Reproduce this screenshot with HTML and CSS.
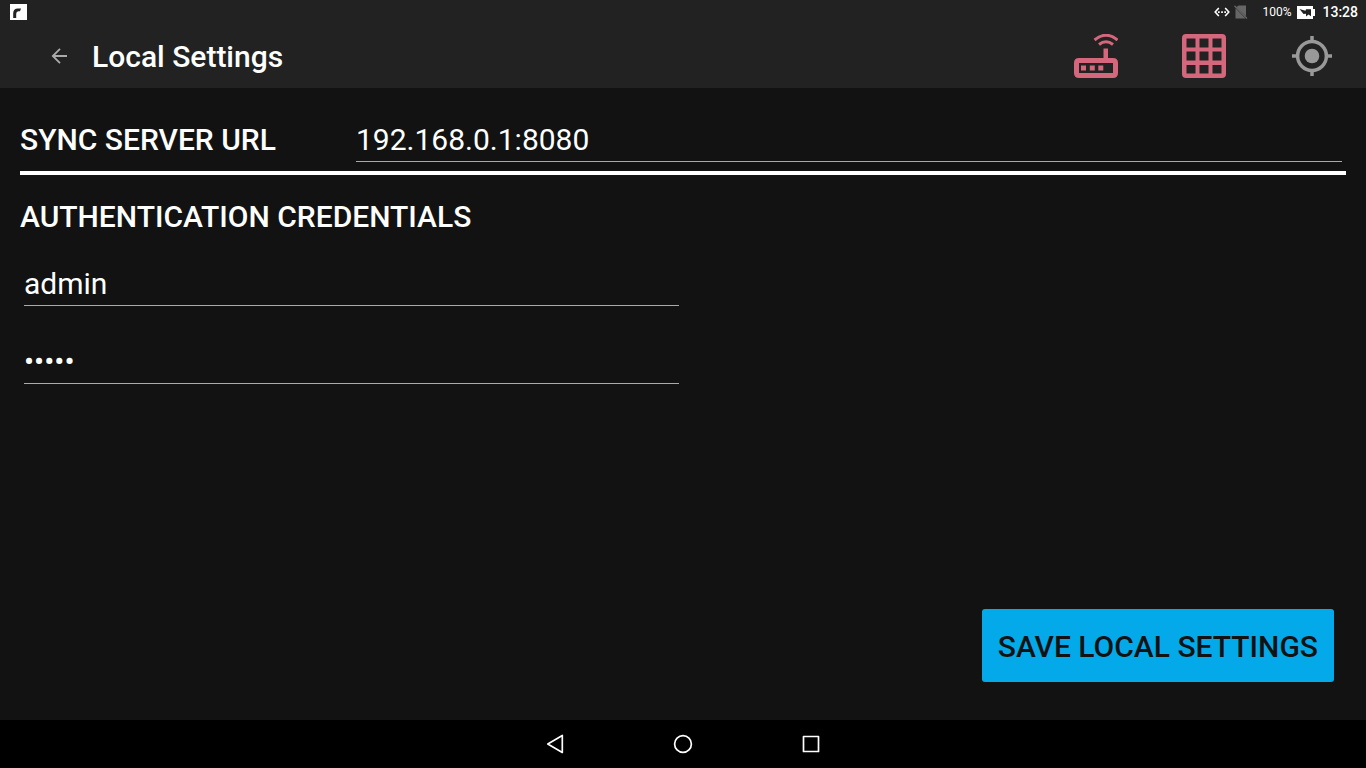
FILE: index.html
```html
<!DOCTYPE html>
<html lang="en">
<head>
<meta charset="utf-8">
<meta name="viewport" content="width=device-width, initial-scale=1">
<title>Local Settings</title>
<link rel="stylesheet" href="styles.css">
</head>
<body>
<div class="status-bar">
  <svg class="notification" width="17" height="16" viewBox="0 0 17 16" aria-hidden="true">
    <path fill="#fff" d="M0 0h17v16H0z"/>
    <path fill="#222" d="M3.200 14V9.500Q3.200 4.500 8 4.500h3L10 7.200H8.500Q6.200 7.500 6.200 10v4z"/>
  </svg>
  <div class="status-icons">
    <svg width="16" height="12" viewBox="0 0 16 12" fill="none" stroke="#fff" stroke-width="1.600" aria-hidden="true">
      <path d="M4.800 2L1.200 6l3.600 4M11.200 2l3.600 4-3.600 4"/>
      <path fill="#fff" stroke="none" d="M4 5.200h1.700v1.700H4zM7.200 5.200h1.700v1.700H7.200zM10.300 5.200H12v1.700h-1.700z"/>
    </svg>
    <svg class="sim" width="14" height="14" viewBox="0 0 14 14" aria-hidden="true">
      <path fill="#666" d="M4.500 0.500H12v10.800L2.500 2.300zM1.500 3.200l10 10.300h-10z"/>
      <path stroke="#666" stroke-width="1.300" d="M.5.700l12.500 12.800"/>
    </svg>
    <span class="battery-level">100%</span>
    <svg class="battery" width="18" height="13" viewBox="0 0 18 13" aria-hidden="true">
      <path fill="#fff" d="M0 0h16v3h2v7h-2v3H0z"/>
      <path fill="#222" d="M2.500 3L8.500 4.800l.5-1.600H14v7L11.500 8.500 9 10.500V7.800L6.500 8z"/>
    </svg>
    <time class="clock">13:28</time>
  </div>
</div>
<header class="app-bar">
  <button class="icon-button back" type="button" aria-label="Back">
    <svg width="18" height="18" viewBox="0 0 18 18" fill="none" stroke="#aaa" stroke-width="1.800"><path d="M17 9H3M10 1.800L2.800 9l7.200 7.200"/></svg>
  </button>
  <h1 class="title">Local Settings</h1>
  <div class="actions">
    <button class="icon-button" type="button" aria-label="Router">
      <svg width="44" height="44" viewBox="0 0 44 44" fill="#d4677c">
        <path fill-rule="evenodd" d="M5 24h24.500V14.500h4.500V24h5q5 0 5 5v10q0 5-5 5H5q-5 0-5-5V29q0-5 5-5zM5 29v10h34V29z"/>
        <path d="M7 31.500h5v5H7zM15.800 31.500h5v5h-5zM24.300 31.500h5v5h-5z"/>
        <path fill="none" stroke="#d4677c" stroke-width="3" d="M20.500 6Q32-3.500 43.500 6M25 10.500q7-5.500 14 0"/>
      </svg>
    </button>
    <button class="icon-button" type="button" aria-label="Grid">
      <svg width="44" height="44" viewBox="0 0 44 44" fill="#d4677c">
        <path fill-rule="evenodd" d="M4 0h36q4 0 4 4v36q0 4-4 4H4q-4 0-4-4V4q0-4 4-4zM4.500 4.500v9h9v-9zM17.500 4.500v9h9v-9zM30.500 4.500v9h9v-9zM4.500 17.500v9h9v-9zM17.500 17.500v9h9v-9zM30.500 17.500v9h9v-9zM4.500 31v8.500h9V31zM17.500 31v8.500h9V31zM30.500 31v8.500h9V31z"/>
      </svg>
    </button>
    <button class="icon-button" type="button" aria-label="Location">
      <svg width="44" height="44" viewBox="0 0 44 44" fill="none" stroke="#999" stroke-width="3.500">
        <circle cx="22" cy="22" r="14.400"/>
        <circle cx="22" cy="22" r="7.300" fill="#999" stroke="none"/>
        <path d="M22 2v5M22 37v5M2 22h5M37 22h5"/>
      </svg>
    </button>
  </div>
</header>
<main class="content">
  <form class="settings">
    <div class="server-row">
      <label class="heading" for="server">SYNC SERVER URL</label>
      <input class="field" id="server" type="text" value="192.168.0.1:8080">
    </div>
    <fieldset class="credentials">
      <legend class="heading">AUTHENTICATION CREDENTIALS</legend>
      <div class="credential-fields">
        <input class="field" type="text" value="admin" aria-label="User name">
        <input class="field" type="password" value="admin" aria-label="Password">
      </div>
    </fieldset>
    <button class="save" type="submit">SAVE LOCAL SETTINGS</button>
  </form>
</main>
<nav class="nav-bar" aria-label="System">
  <button class="icon-button" type="button" aria-label="Back">
    <svg width="20" height="20" viewBox="0 0 20 20" fill="none" stroke="#fff" stroke-width="1.700" stroke-linejoin="round"><path d="M17.300 1.500v17L2.800 10z"/></svg>
  </button>
  <button class="icon-button" type="button" aria-label="Home">
    <svg width="20" height="20" viewBox="0 0 20 20" fill="none" stroke="#fff" stroke-width="1.700"><circle cx="10" cy="10" r="8.400"/></svg>
  </button>
  <button class="icon-button" type="button" aria-label="Recent apps">
    <svg width="20" height="20" viewBox="0 0 20 20" fill="none" stroke="#fff" stroke-width="1.700" stroke-linejoin="round"><path d="M2.500 2.500h15v15h-15z"/></svg>
  </button>
</nav>
</body>
</html>
```
FILE: styles.css
```css
* {
  box-sizing: border-box;
}

body {
  margin: 0;
  min-height: 100vh;
  display: flex;
  flex-direction: column;
  background: #121212;
  color: #fff;
  font-family: Roboto, sans-serif;
}

svg {
  display: block;
  flex: none;
}

.icon-button {
  display: flex;
  padding: 0;
  border: 0;
  background: none;
}

.status-bar {
  display: flex;
  align-items: center;
  justify-content: space-between;
  height: 24px;
  padding: 0 8px 0 10px;
  background: #222;
}

.status-icons {
  display: flex;
  align-items: center;
}

.sim {
  margin: 0 14px 0 4px;
}

.battery-level {
  font-size: 12px;
}

.battery {
  margin: 0 7px 0 6px;
}

.clock {
  font-size: 14px;
  font-weight: 500;
}

.app-bar {
  display: flex;
  align-items: center;
  height: 64px;
  padding: 0 32px 0 50px;
  background: #222;
}

.title {
  margin: 0 0 0 24px;
  padding-top: 2px;
  font-size: 30px;
  line-height: 40px;
  font-weight: 500;
}

.actions {
  display: flex;
  gap: 64px;
  margin-left: auto;
}

.content {
  flex: 1;
  display: flex;
  flex-direction: column;
  padding: 32px 20px 38px;
}

.settings {
  flex: 1;
  display: flex;
  flex-direction: column;
}

.heading {
  padding: 0;
  font-size: 30px;
  line-height: 40px;
  font-weight: 500;
}

.server-row {
  display: grid;
  grid-template-columns: 336px 1fr;
  padding: 0 4px 9px 0;
}

.field {
  display: block;
  width: 100%;
  height: 42px;
  padding: 0 0 3px;
  border: 0;
  border-bottom: 1px solid #aaa;
  border-radius: 0;
  outline: 0;
  background: none;
  color: #fff;
  font: 30px/38px Roboto, sans-serif;
}

.credentials {
  margin: 0;
  padding: 22px 0 0;
  border: 0;
  border-top: 4px solid #fff;
  min-width: 0;
}

.credentials .heading {
  float: left;
  width: 100%;
}

.credential-fields {
  clear: both;
  display: grid;
  gap: 36px;
  width: 50%;
  padding: 27px 4px 0;
}

.save {
  align-self: flex-end;
  margin: auto 12px 0 0;
  padding: 18px 16px 15px;
  border: 0;
  border-radius: 3px;
  background: #03a9e8;
  color: #121212;
  font: 500 30px/40px Roboto, sans-serif;
}

.nav-bar {
  display: flex;
  align-items: center;
  justify-content: center;
  gap: 108px;
  height: 48px;
  background: #000;
}
```
